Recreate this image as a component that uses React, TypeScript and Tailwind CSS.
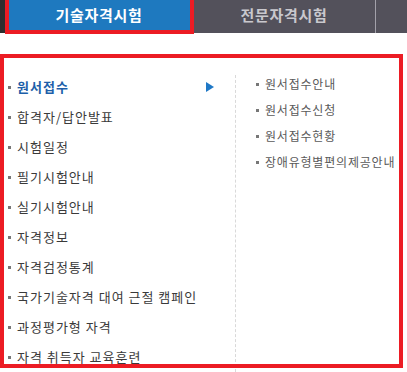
const mainMenu = [
  "원서접수",
  "합격자/답안발표",
  "시험일정",
  "필기시험안내",
  "실기시험안내",
  "자격정보",
  "자격검정통계",
  "국가기술자격 대여 근절 캠페인",
  "과정평가형 자격",
  "자격 취득자 교육훈련",
]

const subMenu = ["원서접수안내", "원서접수신청", "원서접수현황", "장애유형별편의제공안내"]

export default function App() {
  return (
    <div
      className="relative w-[407px] h-[372px] overflow-hidden bg-white"
      style={{ fontFamily: '"Noto Sans CJK KR", "Noto Sans", sans-serif' }}
    >
      {/* tab bar */}
      <div className="flex h-[33px] bg-[#53515b]">
        <div className="w-[5px] bg-[#2e2e2e]" />
        <div className="w-[188px] flex items-center justify-center pb-[3px] bg-[#1e79bf] text-white text-[15px] font-bold tracking-[0.7px]">
          기술자격시험
        </div>
        <div className="w-[182px] flex items-center justify-center pb-[3px] text-[#c9c8cd] text-[15px] font-bold tracking-[0.7px]">
          전문자격시험
        </div>
        <div className="w-[1px] bg-[#a3a1aa]" />
        <div className="flex-1" />
      </div>

      {/* menu body */}
      <div className="flex mt-[39px] pl-[4px]">
        <ul className="w-[231px] flex flex-col">
          {mainMenu.map((item, i) => (
            <li key={item} className="flex items-center h-[30px] leading-[30px] text-[13px] tracking-[1px]">
              <span className="w-[3px] h-[3px] ml-[4px] mr-[6px] bg-[#777]" />
              <span className={i === 0 ? "flex-1 text-[#1d5fa9] font-bold" : "flex-1 text-[#3a3a3a]"}>{item}</span>
              {i === 0 && (
                <svg width="8" height="10" viewBox="0 0 8 10" className="mr-[21px]">
                  <path d="M0 0 L8 5 L0 10 Z" fill="#1f78c6" />
                </svg>
              )}
            </li>
          ))}
        </ul>
        <ul className="flex-1 mt-[3px] border-l border-dashed border-[#d9d9d9] pl-[20px]">
          {subMenu.map((item) => (
            <li key={item} className="flex items-center h-[26px] text-[12px] tracking-[0.8px] text-[#5a5a5a] -translate-y-[4px]">
              <span className="w-[3px] h-[3px] mr-[6px] bg-[#777]" />
              {item}
            </li>
          ))}
        </ul>
      </div>

      {/* red highlight boxes */}
      <div className="absolute left-[5px] top-[-4px] w-[189px] h-[38px] border-4 border-[#ec1c24]" />
      <div className="absolute left-0 top-[54px] w-[403px] h-[314px] border-4 border-[#ec1c24]" />
    </div>
  )
}
